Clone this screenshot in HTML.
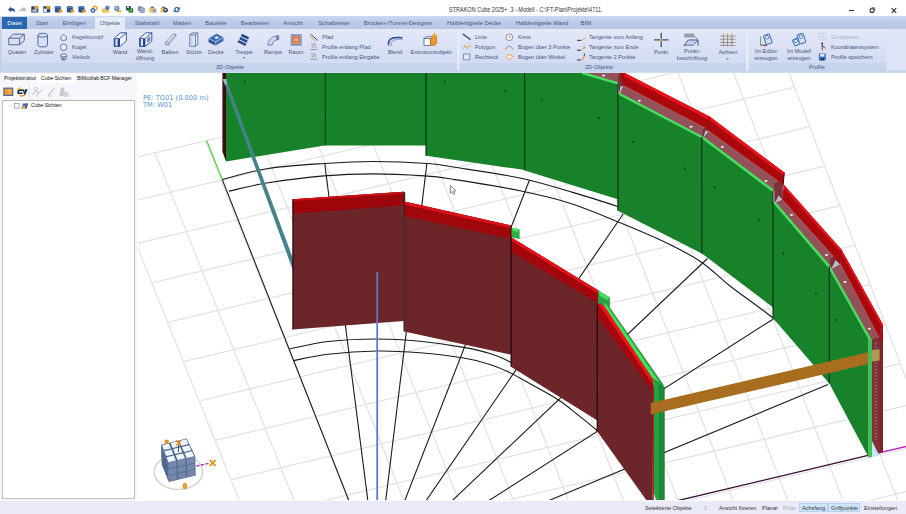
<!DOCTYPE html>
<html lang="de">
<head>
<meta charset="utf-8">
<title>STRAKON Cube 2025+ .3 - Modell</title>
<style>
html,body{margin:0;padding:0;}
body{width:906px;height:514px;position:relative;overflow:hidden;background:#fff;font-family:"Liberation Sans",sans-serif;color:#2b3a55;}
.abs{position:absolute;}
#title{left:0;top:0;width:906px;height:17px;background:#fff;}
#ttext{left:449px;top:6.3px;font-size:6.3px;line-height:8px;color:#333;white-space:nowrap;transform-origin:0 0;transform:scaleX(.875);}
#tabs{left:0;top:16.2px;width:906px;height:13.2px;background:linear-gradient(#cdd9f1,#bccbea 40%,#b7c7e7);}
.tab{position:absolute;top:1.1px;height:12px;line-height:12px;font-size:6.2px;color:#45557a;text-align:center;white-space:nowrap;transform:translateX(-50%) scaleX(.95);}
#datei{position:absolute;left:2px;top:0.8px;width:25px;height:12.4px;background:#2b67ad;color:#fff;font-size:6.2px;line-height:12px;text-align:center;}
#acttab{position:absolute;left:95px;top:0.8px;width:30px;height:12.4px;background:#e6ebf8;}
#ribbon{left:0;top:29.3px;width:906px;height:34px;background:linear-gradient(#e4e9f8,#dde3f6 40%,#d2dbf2);}
#riblab{left:0;top:63px;width:906px;height:7.4px;background:#c6d4ee;}
#ribgap{left:0;top:70.4px;width:906px;height:2.6px;background:linear-gradient(#bccbe9,#d3def3);}
.big{position:absolute;font-size:6.2px;line-height:7.7px;text-align:center;color:#45557a;white-space:nowrap;transform:translateX(-50%) scaleX(.9);top:48px;}
.sm{position:absolute;font-size:6.2px;line-height:8px;color:#45557a;white-space:nowrap;transform-origin:0 0;transform:scaleX(.9);}
.glab{position:absolute;top:61.9px;font-size:6.2px;line-height:9px;color:#45557a;white-space:nowrap;transform:translateX(-50%) scaleX(.9);}
#left{left:0;top:73px;width:137px;height:428px;background:#f6f6fb;}
#ltabs{position:absolute;left:0;top:0;width:137px;height:10px;}
.lt{position:absolute;top:1px;font-size:5.4px;line-height:9px;color:#222;white-space:nowrap;letter-spacing:-0.1px;transform-origin:0 0;transform:scaleX(.965);}
#tree{position:absolute;left:2px;top:26.6px;width:131px;height:397px;background:#fff;border:1px solid #bdbdc6;border-top:1.6px solid #b4b4bd;}
#status{left:0;top:501px;width:906px;height:13px;background:#e9e9f8;}
.st{position:absolute;top:3.2px;font-size:6px;line-height:8px;color:#333;white-space:nowrap;transform-origin:0 0;transform:scaleX(.92);}
.sth{position:absolute;top:2px;height:9px;background:#cfe3f9;border:1px solid #b3d1f3;box-sizing:border-box;}
#view{left:0;top:0;}
</style>
</head>
<body>
<!-- TITLE BAR -->
<div id="title" class="abs">
  <div id="ttext" class="abs">STRAKON Cube 2025+ .3 - Modell - C:\FT-Plan\Projekte\4711</div>
  <svg class="abs" style="left:0;top:0" width="906" height="17" viewBox="0 0 906 17" id="qat">
<path d="M8,9.6 L11.2,6.8 L11.2,8.3 C14.2,8.2 15.6,10 14.6,12.6 C14.2,11.2 13.2,10.7 11.2,10.8 L11.2,12.3 Z" fill="#2c4f9e"/>
<path d="M26.6,9.6 L23.4,6.8 L23.4,8.3 C20.4,8.2 19,10 20,12.6 C20.4,11.2 21.4,10.7 23.4,10.8 L23.4,12.3 Z" fill="#b9bcc6"/>
<rect x="31.3" y="6.2" width="7" height="6.3" rx="0.6" fill="#27467c"/>
<rect x="34.4" y="5.8" width="3.4" height="3.6" fill="#f0a02c"/>
<rect x="32.4" y="9.6" width="4.6" height="2" fill="#c9d6ea"/>
<rect x="43.2" y="6.2" width="7" height="6.3" rx="0.6" fill="#27467c"/>
<rect x="46.4" y="5.8" width="3.2" height="3.4" fill="#f0a02c"/>
<rect x="43.6" y="8.6" width="3.2" height="3.4" fill="#dfe6f2"/>
<path d="M54.8,7.2 a3,1.2 0 0 1 6,0 v4.2 a3,1.2 0 0 1 -6,0 z" fill="#2b5494"/>
<ellipse cx="57.8" cy="7.2" rx="3" ry="1.1" fill="#4a78bd"/>
<rect x="58.7" y="9.4" width="3.6" height="3" rx="0.8" fill="#e8942e"/>
<path d="M66.8,7.2 a3,1.2 0 0 1 6,0 v4.2 a3,1.2 0 0 1 -6,0 z" fill="#2b5494"/>
<ellipse cx="69.8" cy="7.2" rx="3" ry="1.1" fill="#4a78bd"/>
<rect x="70.7" y="9.4" width="3.6" height="3" rx="0.8" fill="#e8942e"/>
<path d="M78.4,7.2 a3,1.2 0 0 1 6,0 v4.2 a3,1.2 0 0 1 -6,0 z" fill="#2b5494"/>
<ellipse cx="81.4" cy="7.2" rx="3" ry="1.1" fill="#4a78bd"/>
<rect x="82.3" y="9.4" width="3.6" height="3" rx="0.8" fill="#e8942e"/>
<circle cx="95" cy="8.2" r="1.9" fill="none" stroke="#f0a02c" stroke-width="1.4"/>
<circle cx="92.9" cy="10.5" r="1.8" fill="none" stroke="#3b6cc0" stroke-width="1.4"/>
<path d="M102,8.4 h3 l0.8,0.9 h3.2 v3.4 h-7 z" fill="#f3c552"/>
<circle cx="107.3" cy="7.8" r="2.3" fill="#4b78c0"/>
<path d="M105.4,7.2 q1.9,-1 3.8,0" stroke="#a9c4ea" stroke-width="0.6" fill="none"/>
<circle cx="116.8" cy="8.4" r="2.6" fill="#5b8cd0"/>
<circle cx="116.4" cy="7.9" r="1.2" fill="#a9c6ee"/>
<path d="M116.6,10.6 h3 v-1 l1.9,1.7 l-1.9,1.7 v-1 h-3 z" fill="#f0a02c"/>
<rect x="125.9" y="5.9" width="5" height="4.6" rx="0.5" fill="#3b4a63"/>
<rect x="127" y="6.4" width="2" height="1.6" fill="#cfd8e6"/>
<rect x="128.6" y="8.4" width="4.6" height="4.2" fill="#1f7a25"/>
<path d="M129.6,10.4 h2.6 M130.9,9.2 v2.5" stroke="#7fd07f" stroke-width="0.8"/>
<rect x="137.8" y="6.3" width="4.2" height="4.6" rx="0.6" fill="#8394b4"/>
<rect x="139.8" y="7.8" width="4.6" height="4.8" rx="0.6" fill="#9fb0cc" stroke="#6b7e9f" stroke-width="0.6"/>
<path d="M149.1,8 h2.6 l0.7,0.8 h3 v3.8 h-6.3 z" fill="#ecc95e"/>
<rect x="152.6" y="8.6" width="3.8" height="4" fill="#9aa3b3"/>
<rect x="150.6" y="6.6" width="3.4" height="1.6" fill="#6a6f7c"/>
<path d="M160.5,8 h2.6 l0.7,0.8 h3 v3.8 h-6.3 z" fill="#ecc95e"/>
<circle cx="165.6" cy="10.2" r="2.4" fill="#2c4f86"/>
<circle cx="165.3" cy="9.8" r="1" fill="#e6d58a"/>
<rect x="162" y="6.6" width="3.4" height="1.6" fill="#6a6f7c"/>
<path d="M174,9 a2.9,2.6 0 0 1 5,-1.2 l0.9,-0.9 v2.8 h-2.8 l0.9,-0.9 a1.6,1.5 0 0 0 -2.6,0.4 z" fill="#2f5fae"/>
<path d="M179.6,10.2 a2.9,2.6 0 0 1 -5,1.2 l-0.9,0.9 v-2.8 h2.8 l-0.9,0.9 a1.6,1.5 0 0 0 2.6,-0.4 z" fill="#2f5fae"/>
<path d="M848.8,10.4 h5.2" stroke="#2a2a2a" stroke-width="1"/>
<rect x="870.2" y="8.8" width="3.6" height="3.6" rx="0.8" fill="none" stroke="#2a2a2a" stroke-width="1.1"/>
<path d="M871.4,8.4 q0,-0.7 0.7,-0.7 h2 q0.7,0 0.7,0.7 v2.4" fill="none" stroke="#2a2a2a" stroke-width="0.7"/>
<path d="M891.6,8.2 l4.6,4.6 M896.2,8.2 l-4.6,4.6" stroke="#2a2a2a" stroke-width="1.1"/>
</svg>
</div>
<!-- RIBBON TABS -->
<div id="tabs" class="abs">
  <div id="datei">Datei</div>
  <div id="acttab"></div>
  <div class="tab" style="left:42px">Start</div>
  <div class="tab" style="left:74px">Einfügen</div>
  <div class="tab" style="left:109.5px">Objekte</div>
  <div class="tab" style="left:146.5px">Stabstahl</div>
  <div class="tab" style="left:182px">Matten</div>
  <div class="tab" style="left:216px">Bauteile</div>
  <div class="tab" style="left:255.3px">Bearbeiten</div>
  <div class="tab" style="left:293.4px">Ansicht</div>
  <div class="tab" style="left:334px">Schalbretter</div>
  <div class="tab" style="left:398.2px">Brücken-/Tunnel-Designer</div>
  <div class="tab" style="left:474px">Halbfertigteile Decke</div>
  <div class="tab" style="left:541.7px">Halbfertigteile Wand</div>
  <div class="tab" style="left:586.3px">BIM</div>
</div>
<!-- RIBBON BODY -->
<div id="ribbon" class="abs"></div>
<div id="riblab" class="abs"></div>
<div id="ribgap" class="abs"></div>
<div id="ribtext">
  <div class="big" style="left:16.8px">Quader</div>
  <div class="big" style="left:43.9px">Zylinder</div>
  <div class="sm" style="left:72.4px;top:33px">Kegelstumpf</div>
  <div class="sm" style="left:72.4px;top:43px">Kugel</div>
  <div class="sm" style="left:72.4px;top:53px">Vieleck</div>
  <div class="big" style="left:120.3px">Wand</div>
  <div class="big" style="left:145.4px;top:46.5px">Wand-<br>öffnung</div>
  <div class="big" style="left:170.4px">Balken</div>
  <div class="big" style="left:193.7px">Stütze</div>
  <div class="big" style="left:216px">Decke</div>
  <div class="big" style="left:244px">Treppe</div>
  <div class="big" style="left:272.9px">Rampe</div>
  <div class="big" style="left:296.4px">Raum</div>
  <div class="sm" style="left:322.2px;top:33px">Pfad</div>
  <div class="sm" style="left:322.2px;top:43px">Profile entlang Pfad</div>
  <div class="sm" style="left:322.2px;top:53px">Profile entlang Eingabe</div>
  <div class="big" style="left:395.4px">Blend</div>
  <div class="big" style="left:430.5px">Extrusionsobjekt</div>
  <div class="glab" style="left:229.5px">3D-Objekte</div>

  <div class="sm" style="left:475.3px;top:33px">Linie</div>
  <div class="sm" style="left:475.3px;top:43px">Polygon</div>
  <div class="sm" style="left:475.3px;top:53px">Rechteck</div>
  <div class="sm" style="left:518px;top:33px">Kreis</div>
  <div class="sm" style="left:518px;top:43px">Bogen über 3 Punkte</div>
  <div class="sm" style="left:518px;top:53px">Bogen über Winkel</div>
  <div class="sm" style="left:589.3px;top:33px">Tangente vom Anfang</div>
  <div class="sm" style="left:589.3px;top:43px">Tangente zum Ende</div>
  <div class="sm" style="left:589.3px;top:53px">Tangente 2 Punkte</div>
  <div class="big" style="left:661.3px">Punkt</div>
  <div class="big" style="left:691.5px;top:46.5px">Punkt-<br>beschriftung</div>
  <div class="big" style="left:727.9px">Achsen</div>
  <div class="glab" style="left:599.4px">2D-Objekte</div>

  <div class="big" style="left:765.5px;top:46.5px">Im Editor<br>erzeugen</div>
  <div class="big" style="left:798.8px;top:46.5px">Im Modell<br>erzeugen</div>
  <div class="sm" style="left:831.1px;top:33px;color:#aab2c4">Gruppieren</div>
  <div class="sm" style="left:831.1px;top:43px">Koordinatensystem</div>
  <div class="sm" style="left:831.1px;top:53px">Profile speichern</div>
  <div class="glab" style="left:816.8px">Profile</div>
</div>

<!-- LEFT PANEL -->
<div id="left" class="abs">
  <div id="ltabs">
    <div class="abs" style="left:38px;top:0;width:37px;height:10px;background:#fff"></div>
    <div class="lt" style="left:4px">Projektstruktur</div>
    <div class="lt" style="left:41px">Cube-Sichten</div>
    <div class="lt" style="left:77px">BIMcollab BCF Manager</div>
  </div>
  <div id="tree">
    <div class="lt" style="left:27.5px;top:0.6px;line-height:8px">Cube-Sichten</div>
  </div>
</div>

<!-- VIEWPORT -->
<svg id="view" class="abs" width="906" height="514" viewBox="0 0 906 514">
  <defs><clipPath id="vp"><rect x="138" y="73" width="768" height="427"/></clipPath></defs>
  <g clip-path="url(#vp)" id="scene">
<g stroke="#e2e2e2" stroke-width="1.25" fill="none">
<line x1="104.3" y1="164.9" x2="245.1" y2="515.0" stroke="#e2e2e2" stroke-width="1.25"/>
<line x1="154.9" y1="152.9" x2="299.9" y2="515.0" stroke="#e2e2e2" stroke-width="1.25"/>
<line x1="205.5" y1="140.9" x2="354.8" y2="515.0" stroke="#e2e2e2" stroke-width="1.25"/>
<line x1="256.1" y1="128.8" x2="409.6" y2="515.0" stroke="#e2e2e2" stroke-width="1.25"/>
<line x1="306.8" y1="116.8" x2="464.5" y2="515.0" stroke="#e2e2e2" stroke-width="1.25"/>
<line x1="357.5" y1="104.8" x2="519.3" y2="515.0" stroke="#e2e2e2" stroke-width="1.25"/>
<line x1="408.2" y1="92.7" x2="574.2" y2="515.0" stroke="#e2e2e2" stroke-width="1.25"/>
<line x1="459.0" y1="80.7" x2="629.1" y2="515.0" stroke="#e2e2e2" stroke-width="1.25"/>
<line x1="509.8" y1="68.6" x2="683.9" y2="515.0" stroke="#e2e2e2" stroke-width="1.25"/>
<line x1="560.6" y1="56.5" x2="738.8" y2="515.0" stroke="#e2e2e2" stroke-width="1.25"/>
<line x1="611.5" y1="44.4" x2="793.6" y2="515.0" stroke="#e2e2e2" stroke-width="1.25"/>
<line x1="662.4" y1="32.4" x2="848.5" y2="515.0" stroke="#e2e2e2" stroke-width="1.25"/>
<line x1="713.4" y1="20.3" x2="903.3" y2="515.0" stroke="#e2e2e2" stroke-width="1.25"/>
<line x1="764.3" y1="8.1" x2="958.2" y2="515.0" stroke="#e2e2e2" stroke-width="1.25"/>
<line x1="104.3" y1="164.9" x2="764.3" y2="8.1" stroke="#e2e2e2" stroke-width="1.25"/>
<line x1="120.1" y1="204.2" x2="779.4" y2="47.7" stroke="#e2e2e2" stroke-width="1.25"/>
<line x1="135.9" y1="243.6" x2="794.5" y2="87.2" stroke="#e2e2e2" stroke-width="1.25"/>
<line x1="151.8" y1="282.9" x2="809.7" y2="126.7" stroke="#e2e2e2" stroke-width="1.25"/>
<line x1="167.6" y1="322.3" x2="824.8" y2="166.2" stroke="#e2e2e2" stroke-width="1.25"/>
<line x1="183.4" y1="361.6" x2="839.9" y2="205.7" stroke="#e2e2e2" stroke-width="1.25"/>
<line x1="199.2" y1="401.0" x2="855.0" y2="245.2" stroke="#e2e2e2" stroke-width="1.25"/>
<line x1="215.0" y1="440.3" x2="870.1" y2="284.7" stroke="#e2e2e2" stroke-width="1.25"/>
<line x1="230.8" y1="479.6" x2="885.2" y2="324.2" stroke="#e2e2e2" stroke-width="1.25"/>
<line x1="246.7" y1="519.0" x2="900.3" y2="363.7" stroke="#e2e2e2" stroke-width="1.25"/>
<line x1="262.5" y1="558.3" x2="915.5" y2="403.3" stroke="#e2e2e2" stroke-width="1.25"/>
<line x1="278.3" y1="597.7" x2="930.6" y2="442.8" stroke="#e2e2e2" stroke-width="1.25"/>
<line x1="294.1" y1="637.0" x2="945.7" y2="482.3" stroke="#e2e2e2" stroke-width="1.25"/>
<line x1="309.9" y1="676.4" x2="960.8" y2="521.8" stroke="#e2e2e2" stroke-width="1.25"/>
<line x1="325.7" y1="715.7" x2="975.9" y2="561.3" stroke="#e2e2e2" stroke-width="1.25"/>
<line x1="341.6" y1="755.1" x2="991.0" y2="600.8" stroke="#e2e2e2" stroke-width="1.25"/>
<line x1="357.4" y1="794.4" x2="1006.1" y2="640.3" stroke="#e2e2e2" stroke-width="1.25"/>
<line x1="373.2" y1="833.7" x2="1021.2" y2="679.8" stroke="#e2e2e2" stroke-width="1.25"/>
<line x1="389.0" y1="873.1" x2="1036.4" y2="719.3" stroke="#e2e2e2" stroke-width="1.25"/>
<line x1="404.8" y1="912.4" x2="1051.5" y2="758.9" stroke="#e2e2e2" stroke-width="1.25"/>
<line x1="420.6" y1="951.8" x2="1066.6" y2="798.4" stroke="#e2e2e2" stroke-width="1.25"/>
<line x1="436.5" y1="991.1" x2="1081.7" y2="837.9" stroke="#e2e2e2" stroke-width="1.25"/>
</g>
<g stroke="#1a1a1a" stroke-width="1.1" fill="none">
<path d="M222.3,179.6 C229.7,177.8 249.7,171.4 266.7,168.7 C283.7,166.0 306.4,164.7 324.1,163.5 C341.8,162.3 355.7,161.5 372.9,161.5 C390.1,161.5 413.7,162.5 427.4,163.5 C441.1,164.5 439.6,164.9 455.0,167.3 C470.4,169.7 500.7,173.9 520.0,178.0 C539.3,182.1 554.5,187.0 570.8,191.8 C587.0,196.6 602.6,201.2 617.5,206.6 C632.4,212.0 652.9,221.1 660.0,224.0"/>
<path d="M228.9,191.1 C235.2,189.8 250.8,185.5 266.7,183.0 C282.6,180.5 306.4,177.4 324.1,175.9 C341.8,174.4 356.1,173.9 372.9,173.9 C389.6,173.9 410.9,175.0 424.6,175.9 C438.3,176.8 439.1,177.1 455.0,179.6 C470.9,182.1 500.7,186.7 520.0,190.7 C539.3,194.7 554.2,198.1 570.8,203.4 C587.4,208.7 603.4,215.8 619.6,222.5 C635.9,229.2 654.5,237.0 668.3,243.7 C682.1,250.4 691.9,255.6 702.2,262.7 C712.5,269.8 718.2,276.8 730.0,286.0 C741.8,295.2 761.3,308.3 773.0,318.1 C784.7,327.9 795.5,340.5 800.0,345.0"/>
<path d="M289.6,348.9 C296.0,347.7 313.5,343.1 328.0,341.5 C342.5,339.9 361.4,339.0 376.7,339.0 C392.0,339.0 405.5,339.9 420.0,341.3 C434.5,342.7 451.9,345.3 463.6,347.4 C475.3,349.4 482.1,351.1 490.0,353.6 C497.9,356.1 504.0,358.7 511.0,362.4 C518.0,366.1 528.5,373.7 532.0,376.0"/>
<path d="M293.8,360.6 C299.5,359.5 314.2,355.8 328.0,354.2 C341.8,352.6 361.4,351.2 376.7,351.0 C392.0,350.8 405.5,351.6 420.0,352.8 C434.5,354.0 451.9,356.1 463.6,358.0 C475.3,359.9 482.1,362.0 490.0,364.5 C497.9,367.0 503.9,369.7 511.0,373.2 C518.1,376.7 524.9,380.9 532.8,385.3 C540.6,389.7 550.6,394.9 558.1,399.8 C565.6,404.7 571.0,409.4 577.5,414.5 C584.0,419.6 589.9,424.2 597.0,430.5 C604.1,436.8 616.2,448.4 620.0,452.0"/>
<line x1="222.3" y1="179.6" x2="377.0" y2="572.0" stroke="#1a1a1a" stroke-width="1.1"/>
<line x1="324.7" y1="163.5" x2="377.0" y2="572.0" stroke="#1a1a1a" stroke-width="1.1"/>
<line x1="426.9" y1="163.5" x2="377.0" y2="572.0" stroke="#1a1a1a" stroke-width="1.1"/>
<line x1="529.5" y1="180.0" x2="377.0" y2="572.0" stroke="#1a1a1a" stroke-width="1.1"/>
<line x1="623.2" y1="214.0" x2="377.0" y2="572.0" stroke="#1a1a1a" stroke-width="1.1"/>
<line x1="707.5" y1="258.5" x2="377.0" y2="572.0" stroke="#1a1a1a" stroke-width="1.1"/>
<line x1="773.0" y1="319.2" x2="377.0" y2="572.0" stroke="#1a1a1a" stroke-width="1.1"/>
<line x1="828.0" y1="384.5" x2="377.0" y2="572.0" stroke="#1a1a1a" stroke-width="1.1"/>
</g>
<line x1="868.1" y1="455.4" x2="377.0" y2="572.0" stroke="#3a0a35" stroke-width="1.3"/>
<line x1="868.1" y1="455.4" x2="910.0" y2="445.6" stroke="#c21fc0" stroke-width="1.3"/>
<line x1="206.6" y1="140.5" x2="222.3" y2="179.6" stroke="#5ccf4a" stroke-width="1.3"/>
<polygon points="572.0,70.0 626.0,70.0 623.9,86.0 618.0,83.5 582.0,73.0" fill="#93525a"/>
<polygon points="623.9,85.7 708.7,129.8 702.5,137.0 619.5,93.5" fill="#93525a"/>
<polygon points="708.7,131.0 783.5,185.0 774.1,191.3 702.8,137.5" fill="#93525a"/>
<polygon points="782.2,199.4 840.0,263.7 829.8,266.9 774.5,202.6" fill="#93525a"/>
<polygon points="840.5,264.0 879.0,337.4 870.5,339.5 830.8,269.0" fill="#93525a"/>
<polygon points="618.0,76.0 623.9,73.0 623.9,88.0 618.5,93.0" fill="#7b3138"/>
<polygon points="702.5,130.0 708.7,124.0 708.7,131.5 702.8,137.5" fill="#7b3138"/>
<polygon points="774.1,184.0 783.0,178.0 782.7,199.4 774.3,202.0" fill="#7b3138"/>
<polygon points="829.8,259.0 840.0,253.0 840.3,264.0 830.5,269.0" fill="#7b3138"/>
<polygon points="619.2,93.2 623.8,86.6 620.6,86.0" fill="#b4bfcc"/>
<polygon points="703.4,137.4 708.6,131.4 705.4,130.6" fill="#b4bfcc"/>
<polygon points="775.2,202.4 782.4,199.6 778.6,195.6" fill="#b4bfcc"/>
<polygon points="831.4,268.8 839.9,264.2 835.6,260.0" fill="#b4bfcc"/>
<polygon points="624.8,70.0 624.8,73.0 709.6,116.6 708.7,129.8 623.9,85.7 618.0,70.0" fill="#a9080d"/>
<polygon points="709.6,116.6 784.4,172.4 783.5,185.0 708.7,131.0" fill="#a9080d"/>
<polygon points="783.7,184.4 841.6,249.7 840.0,263.7 782.2,199.4" fill="#a9080d"/>
<polygon points="841.6,249.7 882.9,324.5 879.0,337.4 840.5,264.0" fill="#a9080d"/>
<polygon points="624.8,73.0 709.6,116.6 709.3,120.0 624.5,76.4" fill="#e8121a"/>
<polygon points="709.6,116.6 784.4,172.4 784.1,175.8 709.3,120.0" fill="#e8121a"/>
<polygon points="783.7,184.4 841.6,249.7 841.3,253.1 783.4,187.8" fill="#e8121a"/>
<polygon points="841.6,249.7 882.9,324.5 882.6,327.9 841.3,253.1" fill="#e8121a"/>
<line x1="784.2" y1="172.4" x2="783.2" y2="185.0" stroke="#5a0508" stroke-width="1"/>
<line x1="709.3" y1="116.6" x2="708.7" y2="130.0" stroke="#7a0508" stroke-width="0.8"/>
<line x1="841.3" y1="249.7" x2="840.2" y2="264.0" stroke="#7a0508" stroke-width="0.8"/>
<polygon points="226.0,70.0 324.5,70.0 324.5,145.4 226.0,161.5" fill="#17822a"/>
<polygon points="324.5,70.0 426.0,70.0 426.0,145.4 324.5,145.4" fill="#17822a"/>
<polygon points="426.0,70.0 524.7,70.0 524.7,170.0 426.0,155.8" fill="#17822a"/>
<polygon points="524.7,70.0 573.0,70.0 582.4,73.0 617.9,83.4 617.9,199.2 524.7,170.5" fill="#17822a"/>
<polygon points="617.9,93.2 701.8,137.0 701.8,253.4 617.9,210.8" fill="#17822a"/>
<polygon points="701.8,137.0 773.0,190.6 773.0,307.4 701.8,253.4" fill="#17822a"/>
<polygon points="773.0,201.5 829.3,266.5 829.3,383.4 773.0,318.1" fill="#17822a"/>
<polygon points="829.3,267.5 868.6,338.0 868.6,457.2 829.3,383.4" fill="#17822a"/>
<polygon points="222.4,70.0 226.0,70.0 226.0,161.5 222.4,151.5" fill="#3b0d12"/>
<line x1="582.4" y1="73.0" x2="617.9" y2="83.4" stroke="#45e060" stroke-width="2.5"/>
<line x1="618.5" y1="93.5" x2="701.8" y2="137.0" stroke="#45e060" stroke-width="2.5"/>
<line x1="702.8" y1="137.8" x2="773.5" y2="191.0" stroke="#45e060" stroke-width="2.5"/>
<line x1="774.5" y1="202.6" x2="829.5" y2="266.9" stroke="#45e060" stroke-width="2.5"/>
<line x1="830.5" y1="269.0" x2="870.0" y2="339.5" stroke="#45e060" stroke-width="2.5"/>
<line x1="325.0" y1="70.0" x2="325.0" y2="145.4" stroke="#0c2a10" stroke-width="1.1"/>
<line x1="426.0" y1="70.0" x2="426.0" y2="155.8" stroke="#0c2a10" stroke-width="1.1"/>
<line x1="524.7" y1="70.0" x2="524.7" y2="170.3" stroke="#0c2a10" stroke-width="1.1"/>
<line x1="617.9" y1="83.4" x2="617.9" y2="210.8" stroke="#0c2a10" stroke-width="1.1"/>
<line x1="701.8" y1="137.0" x2="701.8" y2="253.4" stroke="#0c2a10" stroke-width="1.1"/>
<line x1="773.0" y1="190.6" x2="773.0" y2="318.1" stroke="#0c2a10" stroke-width="1.1"/>
<line x1="829.3" y1="266.5" x2="829.3" y2="383.4" stroke="#0c2a10" stroke-width="1.1"/>
<polygon points="868.3,338.5 872.0,339.5 872.0,457.0 868.3,457.5" fill="#3fbf55"/>
<polygon points="872.0,339.0 879.0,337.0 883.0,324.5 883.0,452.0 872.0,455.5" fill="#7c3038"/>
<polygon points="879.6,336.0 883.0,324.5 883.0,452.0 879.6,453.0" fill="#84222a"/>
<polygon points="879.6,336.0 883.0,324.5 883.0,341.0 879.6,341.0" fill="#a30c12"/>
<polygon points="872.0,441.0 879.0,455.0 872.0,456.5" fill="#bfe6f2"/>
<line x1="875.8" y1="343" x2="875.8" y2="440" stroke="#94505a" stroke-width="3" stroke-dasharray="1.6 1.6"/>
<circle cx="244.5" cy="81.6" r="0.9" fill="#0a3512"/>
<circle cx="444.5" cy="81.6" r="0.9" fill="#0a3512"/>
<circle cx="505.5" cy="91.0" r="0.9" fill="#0a3512"/>
<circle cx="542.2" cy="99.7" r="0.9" fill="#0a3512"/>
<circle cx="599.0" cy="118.0" r="0.9" fill="#0a3512"/>
<circle cx="633.3" cy="142.0" r="0.9" fill="#0a3512"/>
<circle cx="684.8" cy="168.5" r="0.9" fill="#0a3512"/>
<circle cx="715.0" cy="187.0" r="0.9" fill="#0a3512"/>
<circle cx="759.5" cy="220.5" r="0.9" fill="#0a3512"/>
<circle cx="783.3" cy="253.5" r="0.9" fill="#0a3512"/>
<circle cx="816.0" cy="294.0" r="0.9" fill="#0a3512"/>
<circle cx="836.0" cy="320.0" r="0.9" fill="#0a3512"/>
<circle cx="860.5" cy="365.5" r="0.9" fill="#0a3512"/>
<ellipse cx="603.6" cy="75.4" rx="1.5" ry="1" fill="#f2f2f2"/>
<ellipse cx="639.4" cy="100.7" rx="1.5" ry="1" fill="#f2f2f2"/>
<ellipse cx="691.0" cy="126.8" rx="1.5" ry="1" fill="#f2f2f2"/>
<ellipse cx="722.3" cy="147.0" rx="1.5" ry="1" fill="#f2f2f2"/>
<ellipse cx="766.0" cy="181.0" rx="1.5" ry="1" fill="#f2f2f2"/>
<ellipse cx="791.5" cy="215.0" rx="1.5" ry="1" fill="#f2f2f2"/>
<ellipse cx="826.5" cy="255.0" rx="1.5" ry="1" fill="#f2f2f2"/>
<ellipse cx="845.0" cy="282.0" rx="1.5" ry="1" fill="#f2f2f2"/>
<ellipse cx="869.4" cy="328.8" rx="1.5" ry="1" fill="#f2f2f2"/>
<polygon points="222.8,79.0 226.2,79.0 296.0,266.5 296.0,278.0 291.0,265.0" fill="#44838a"/>
<polygon points="222.8,79.0 226.6,79.0 226.6,86.0 224.6,84.0" fill="#9fb6c8"/>
<polygon points="292.8,199.2 403.8,191.8 403.8,321.0 292.8,329.4" fill="#6c2529"/>
<polygon points="404.3,201.6 511.0,225.4 511.0,354.6 404.3,331.6" fill="#6c2529"/>
<polygon points="511.0,237.3 598.4,290.4 597.0,420.2 511.0,366.7" fill="#6c2529"/>
<polygon points="597.3,304.0 598.4,304.0 653.5,377.8 652.3,500.5 646.6,500.5 597.0,431.0" fill="#6c2529"/>
<polygon points="292.8,199.2 403.8,191.8 403.8,205.3 292.8,213.8" fill="#9c060a"/>
<polygon points="404.3,201.6 511.0,225.4 511.0,239.0 404.3,216.1" fill="#a0070b"/>
<polygon points="511.0,237.3 598.4,290.4 597.3,302.4 511.0,251.6" fill="#a3070c"/>
<polygon points="597.3,303.3 598.4,303.0 652.8,378.6 652.3,390.4 597.3,317.0" fill="#a5080e"/>
<polygon points="292.8,199.2 403.8,191.8 403.8,193.6 292.8,201.1" fill="#cf0f16"/>
<polygon points="404.3,201.6 511.0,225.4 511.0,228.2 404.3,204.4" fill="#dc1119"/>
<polygon points="511.0,237.3 598.4,290.4 598.2,293.6 511.0,240.5" fill="#e8121a"/>
<polygon points="598.1,303.3 602.8,303.3 652.8,378.6 652.6,384.0 649.3,379.0" fill="#f0141c"/>
<polygon points="403.8,191.8 405.5,192.8 405.5,202.8 403.8,202.4" fill="#7e8a8a"/>
<polygon points="511.6,227.8 519.6,229.6 519.6,239.0 511.6,237.6" fill="#2fae48"/>
<polygon points="511.6,227.8 519.6,229.6 517.6,232.0 512.6,230.8" fill="#45e060"/>
<polygon points="598.4,290.8 609.6,297.6 609.6,307.7 598.4,302.8" fill="#2aa444" stroke="#1b6e2a" stroke-width="0.5"/>
<polygon points="598.4,290.8 609.6,297.6 607.2,300.2 599.6,295.4" fill="#45e060"/>
<polygon points="602.8,303.3 609.6,307.7 663.6,385.5 663.6,388.5 652.8,378.6" fill="#25a840"/>
<polygon points="602.8,303.3 607.0,305.6 659.6,382.5 652.8,378.6" fill="#42e25e"/>
<line x1="609.6" y1="307.7" x2="663.6" y2="385.5" stroke="#155c22" stroke-width="0.6"/>
<polygon points="653.6,379.2 664.2,388.0 664.2,500.5 653.6,500.5" fill="#1e9238"/>
<polygon points="653.6,379.2 659.8,384.4 659.8,500.5 653.6,500.5" fill="#27a042"/>
<line x1="653.8" y1="379.4" x2="664.0" y2="388.0" stroke="#1b6e2a" stroke-width="0.7"/>
<line x1="659.8" y1="385.0" x2="659.8" y2="500.0" stroke="#166a26" stroke-width="0.8"/>
<line x1="664.2" y1="386.5" x2="664.2" y2="500.0" stroke="#14602a" stroke-width="0.8"/>
<polygon points="652.3,385.0 653.8,386.0 653.8,500.5 652.3,500.5" fill="#a30c12"/>
<polygon points="653.8,493.0 656.5,500.5 653.8,500.5" fill="#bfe6f2"/>
<line x1="292.9" y1="199.2" x2="292.9" y2="329.4" stroke="#1c0607" stroke-width="1.1"/>
<line x1="404.1" y1="192.0" x2="404.1" y2="331.6" stroke="#1c0607" stroke-width="1.1"/>
<line x1="511.1" y1="226.0" x2="511.1" y2="366.7" stroke="#1c0607" stroke-width="1.1"/>
<line x1="597.2" y1="304.0" x2="597.2" y2="431.0" stroke="#1c0607" stroke-width="1.1"/>
<polygon points="650.7,403.0 868.3,352.3 868.3,364.0 650.7,414.5" fill="#a86d1e"/>
<polygon points="872.0,350.0 879.6,349.3 879.6,360.5 872.0,361.5" fill="#b09a52"/>
<line x1="377.2" y1="272.3" x2="377.2" y2="501.0" stroke="#587ccc" stroke-width="1.8"/>
  </g>
<g font-family="'DejaVu Sans','Liberation Sans',sans-serif" font-size="6.7" fill="#4f93d2">
<text x="143" y="100">PE: TG01 (0.000 m)</text>
<text x="143" y="106.8">TM: W01</text>
</g>
<path d="M450.3,185.2 L450.3,193.2 L452.2,191.6 L453.6,194.4 L454.8,193.8 L453.4,191.1 L456,190.8 Z" fill="#fff" stroke="#555" stroke-width="0.7" stroke-linejoin="round"/>
<ellipse cx="178.4" cy="472" rx="24.2" ry="17.5" fill="none" stroke="#d6d6d6" stroke-width="1.6"/>
<polygon points="161.0,444.8 167.8,462.9 168.8,482.0 161.8,464.5" fill="#445a82"/>
<polygon points="167.8,462.9 195.3,456.5 195.7,475.6 168.8,482.0" fill="#5b7099"/>
<polygon points="161.0,444.8 186.8,438.5 195.3,456.5 167.8,462.9" fill="#4a5f88"/>
<polygon points="162.0,445.2 169.0,443.4 171.0,448.4 163.9,450.1" fill="#edf7fd"/>
<polygon points="168.7,463.3 176.2,461.5 176.4,466.8 168.9,468.5" fill="#7689ad"/>
<polygon points="161.2,445.9 163.1,450.9 163.3,456.2 161.4,451.3" fill="#5a6f98"/>
<polygon points="164.3,451.2 171.5,449.5 173.5,454.4 166.1,456.1" fill="#edf7fd"/>
<polygon points="169.0,469.6 176.4,467.9 176.7,473.1 169.3,474.9" fill="#7689ad"/>
<polygon points="161.5,452.5 163.4,457.4 163.6,462.7 161.7,457.9" fill="#5a6f98"/>
<polygon points="166.5,457.2 173.9,455.5 175.9,460.4 168.4,462.2" fill="#edf7fd"/>
<polygon points="169.3,476.0 176.7,474.3 176.9,479.5 169.6,481.2" fill="#7689ad"/>
<polygon points="161.8,459.1 163.7,463.9 163.9,469.2 162.0,464.4" fill="#5a6f98"/>
<polygon points="170.6,443.1 177.7,441.3 179.8,446.3 172.6,448.0" fill="#edf7fd"/>
<polygon points="177.8,461.1 185.3,459.4 185.5,464.6 178.0,466.4" fill="#7689ad"/>
<polygon points="163.5,452.0 165.4,456.9 165.6,462.2 163.7,457.3" fill="#5a6f98"/>
<polygon points="173.1,449.1 180.3,447.3 182.4,452.3 175.1,454.0" fill="#edf7fd"/>
<polygon points="178.1,467.5 185.5,465.8 185.7,471.0 178.3,472.7" fill="#7689ad"/>
<polygon points="163.8,458.5 165.7,463.3 165.9,468.6 164.0,463.8" fill="#5a6f98"/>
<polygon points="175.5,455.1 182.9,453.4 185.1,458.3 177.6,460.0" fill="#edf7fd"/>
<polygon points="178.3,473.9 185.7,472.1 185.9,477.4 178.6,479.1" fill="#7689ad"/>
<polygon points="164.1,464.9 166.0,469.8 166.2,475.1 164.3,470.3" fill="#5a6f98"/>
<polygon points="179.2,441.0 186.3,439.2 188.6,444.1 181.4,445.9" fill="#edf7fd"/>
<polygon points="187.0,459.0 194.5,457.3 194.6,462.5 187.1,464.2" fill="#7689ad"/>
<polygon points="165.8,458.0 167.6,462.9 167.9,468.2 166.0,463.3" fill="#5a6f98"/>
<polygon points="181.9,447.0 189.1,445.2 191.4,450.2 184.1,451.9" fill="#edf7fd"/>
<polygon points="187.2,465.4 194.6,463.6 194.7,468.9 187.3,470.6" fill="#7689ad"/>
<polygon points="166.1,464.4 168.0,469.3 168.2,474.5 166.3,469.7" fill="#5a6f98"/>
<polygon points="184.5,453.0 191.9,451.2 194.2,456.2 186.7,457.9" fill="#edf7fd"/>
<polygon points="187.4,471.7 194.8,470.0 194.9,475.2 187.5,477.0" fill="#7689ad"/>
<polygon points="166.4,470.8 168.3,475.7 168.6,480.9 166.6,476.1" fill="#5a6f98"/>
<line x1="196.4" y1="466" x2="209" y2="463.3" stroke="#b02ab0" stroke-width="1.4" stroke-dasharray="3.2 1.4"/>
<path d="M210.3,460.5 L215.1,465.3 M210.3,465.3 L215.1,460.5" stroke="#ef8618" stroke-width="1.7" stroke-linecap="round"/>
<path d="M176.4,441.0 L180.4,445.0 M176.4,445.0 L180.4,441.0" stroke="#ef8618" stroke-width="1.7" stroke-linecap="round"/>
<path d="M165.3,440.3 L168.1,443.1 M165.3,443.1 L168.1,440.3" stroke="#ef8618" stroke-width="1.7" stroke-linecap="round"/>
<line x1="178.5" y1="445" x2="178.5" y2="452" stroke="#30406a" stroke-width="0.9"/>
<ellipse cx="184.9" cy="486" rx="2" ry="3" fill="#f0a02a" stroke="#d07a10" stroke-width="0.5"/>
</svg>

<!-- STATUS BAR -->
<div id="status" class="abs">
  <div class="sth" style="left:799px;width:28.5px"></div>
  <div class="sth" style="left:828px;width:31.5px"></div>
  <div class="st" style="left:644.6px">Selektierte Objekte</div>
  <div class="st" style="left:703.5px;color:#999">1</div>
  <div class="st" style="left:718.9px">Ansicht fixieren</div>
  <div class="st" style="left:762.2px">Planar</div>
  <div class="st" style="left:783px;color:#aaa">Polar</div>
  <div class="st" style="left:802px">Achsfang</div>
  <div class="st" style="left:830.5px">Griffpunkte</div>
  <div class="st" style="left:863.5px">Einstellungen</div>
</div>
<svg class="abs" style="left:0;top:0;pointer-events:none" width="906" height="514" viewBox="0 0 906 514" id="chromeicons">
<rect x="457.2" y="29.3" width="2.3" height="41.1" fill="#e9edf9"/>
<rect x="746.2" y="29.3" width="2.3" height="41.1" fill="#e9edf9"/>
<rect x="886.5" y="29.3" width="20" height="41.1" fill="#dfe5f7"/>
<rect x="0" y="29.3" width="1.6" height="41.1" fill="#c3cfe8"/>
<path d="M8.8,38.2 L13.4,34.2 L24.3,34.2 L24.3,40.6 L19.6,44.8 L8.8,44.8 Z" fill="#d6defa" stroke="#4a5f8a" stroke-width="0.9" stroke-linejoin="round"/>
<path d="M8.8,38.2 H19.6 V44.8 M19.6,38.2 L24.3,34.2" fill="none" stroke="#4a5f8a" stroke-width="0.9"/>
<path d="M37.9,35.2 a4.8,2 0 0 1 9.6,0 v9.8 a4.8,2 0 0 1 -9.6,0 z" fill="#d6defa" stroke="#4a5f8a" stroke-width="0.9"/>
<path d="M37.9,35.2 a4.8,2 0 0 0 9.6,0" fill="none" stroke="#4a5f8a" stroke-width="0.9"/>
<path d="M60.6,39 Q60.8,36.4 62.4,35.4 a1.3,0.9 0 0 1 2.4,0 Q66.4,36.4 66.6,39 a3,1.4 0 0 1 -6,0 z" fill="#e9edfb" stroke="#4a5f8a" stroke-width="0.8"/>
<circle cx="63.6" cy="47.2" r="3.3" fill="#e9edfb" stroke="#4a5f8a" stroke-width="0.8"/>
<path d="M60.8,55.4 a2.9,1.4 0 0 1 5.8,0 l-0.8,3.8 a2.1,1 0 0 1 -4.2,0 z" fill="#e9edfb" stroke="#4a5f8a" stroke-width="0.8"/>
<path d="M60.8,55.4 a2.9,1.4 0 0 0 5.8,0" fill="none" stroke="#4a5f8a" stroke-width="0.8"/>
<rect x="62.5" y="57.6" width="2.2" height="2" fill="#4a5f8a"/>
<path d="M114.2,38.2 L120.6,32.8 L126.4,32.8 L126.4,41 L120.0,46.4 L114.2,46.4 Z" fill="#eef2fc" stroke="#27498c" stroke-width="0.9" stroke-linejoin="round"/>
<path d="M114.2,38.2 h5.8 v8.2 h-5.8 z" fill="#24478f"/>
<path d="M115.4,39 h2.2 v6.8 h-2.2 z" fill="#dbe6f8"/>
<path d="M120.0,38.2 L126.4,32.8" stroke="#27498c" stroke-width="0.9"/>
<path d="M139.6,38.2 L146.0,32.8 L151.8,32.8 L151.8,41 L145.4,46.4 L139.6,46.4 Z" fill="#eef2fc" stroke="#27498c" stroke-width="0.9" stroke-linejoin="round"/>
<path d="M139.6,38.2 h5.8 v8.2 h-5.8 z" fill="#24478f"/>
<path d="M140.8,39 h2.2 v6.8 h-2.2 z" fill="#dbe6f8"/>
<path d="M145.4,38.2 L151.8,32.8" stroke="#27498c" stroke-width="0.9"/>
<path d="M147.2,38.6 l3,-2.6 v4.4 l-3,2.6 z" fill="#5e86c6"/>
<path d="M165.4,42.4 L173,34 L176,34 L176,36 L168.6,44.6 L165.4,44.6 Z" fill="#e3e8f8" stroke="#7486a8" stroke-width="0.8" stroke-linejoin="round"/>
<path d="M165.4,42.4 h3.2 v2.2 M168.6,42.4 L176,34" fill="none" stroke="#7486a8" stroke-width="0.8"/>
<path d="M166.6,45.6 L170.2,45.2" stroke="#a6b2c9" stroke-width="0.8"/>
<path d="M189.8,34.8 L192.2,32.9 L197.8,32.9 L197.8,44.4 L195.4,46.3 L189.8,46.3 Z" fill="#e6ebfa" stroke="#5a73a3" stroke-width="0.9" stroke-linejoin="round"/>
<path d="M189.8,34.8 h5.6 v11.5 M195.4,34.8 L197.8,32.9" fill="none" stroke="#5a73a3" stroke-width="0.9"/>
<rect x="190.8" y="36" width="2" height="9.2" fill="#c5d2ee"/>
<path d="M208.9,38.8 L216.4,34.2 L223,37.4 L223,40.8 L215.6,45.2 L208.9,42 Z" fill="#3c6eb5" stroke="#2a4f92" stroke-width="0.7" stroke-linejoin="round"/>
<path d="M208.9,38.8 L215.6,42 L223,37.4 M215.6,42 V45.2" fill="none" stroke="#e8eefb" stroke-width="0.7"/>
<path d="M214.2,37.6 L216.8,36.2 L219.2,37.4 L216.6,38.9 Z" fill="#e8eefb"/>
<path d="M209.2,39.6 L215.4,42.6 V45 L209.2,41.9 Z" fill="#2a4f92"/>
<path d="M241.4,35.0 L248.6,38.3" stroke="#24478f" stroke-width="2.5"/>
<path d="M239.8,38.1 L247.2,41.6" stroke="#24478f" stroke-width="2.5"/>
<path d="M238.1,41.2 L245.9,44.9" stroke="#24478f" stroke-width="2.5"/>
<path d="M242.6,57.2 h2.6 l-1.3,1.5 z" fill="#56668a"/>
<path d="M267.9,45 C268,39.6 272,36 278.8,35.6 L278.8,39.6 C275,39.8 272.4,41.6 272.2,45 Z" fill="#cdd6f4" stroke="#5a6d98" stroke-width="0.8" stroke-linejoin="round"/>
<path d="M277.2,35.8 V39.7" stroke="#3a4a70" stroke-width="1.2"/>
<rect x="290.7" y="34.2" width="11" height="11.6" fill="#8196b8"/>
<rect x="292.5" y="36" width="7.4" height="8" fill="#e8875c"/>
<rect x="294" y="38" width="4.4" height="3.6" fill="#f4b08a" stroke="#b5562e" stroke-width="0.5"/>
<path d="M310.4,34 L317.6,40.4" stroke="#3a3f55" stroke-width="1"/>
<path d="M309.6,36 L316.2,41.8" stroke="#f0a050" stroke-width="1"/>
<path d="M311,44.2 h4.2 v2.6 l1.2,1.2 M310.2,49.6 h7" fill="none" stroke="#7d88a3" stroke-width="0.8"/>
<circle cx="312.6" cy="46.8" r="1.1" fill="#c9a27a"/>
<path d="M311,54.0 h4.2 v2.6 l1.2,1.2 M310.2,59.4 h7" fill="none" stroke="#7d88a3" stroke-width="0.8"/>
<circle cx="312.6" cy="56.6" r="1.1" fill="#c9a27a"/>
<path d="M388.2,45.4 C387.4,39 392,36.4 402.2,37.6 L402.2,39.6 C394,38.8 391,41 391.4,45.4 Z" fill="#c5cff2" stroke="#7a8cb8" stroke-width="0.6"/>
<path d="M388.6,44.6 C387.8,39 392,36.6 402.2,37.8" fill="none" stroke="#2d4d94" stroke-width="1.5"/>
<rect x="424" y="38.4" width="6.6" height="7" fill="#fbfcff" stroke="#5a6d98" stroke-width="0.9"/>
<path d="M430.6,38.4 L433.2,36.6 L436.6,36.6 L436.6,43.6 L434,45.4 L430.6,45.4 Z" fill="#f0962a" stroke="#b96a12" stroke-width="0.6"/>
<path d="M424,38.4 L426.6,36.6 L433.2,36.6" fill="none" stroke="#5a6d98" stroke-width="0.8"/>
<path d="M434.6,32.4 l0.9,1.9 l2,0.3 l-1.5,1.4 l0.4,2 l-1.8,-1 l-1.8,1 l0.4,-2 l-1.5,-1.4 l2,-0.3 z" fill="#f5a623"/>
<path d="M462.8,34 L470.7,39.8" stroke="#2f3d5e" stroke-width="1.1"/>
<path d="M463,48.8 L465.2,45.6 L467.4,48.4 L469.6,45.2 L471,46.4" fill="none" stroke="#e69a4a" stroke-width="1"/>
<rect x="463.6" y="54" width="6.2" height="5.8" fill="#dfe8fb" stroke="#6a7da5" stroke-width="0.8"/>
<circle cx="509.3" cy="37.3" r="3.4" fill="#eef1fb" stroke="#7d879c" stroke-width="0.9"/>
<circle cx="509.5" cy="37.2" r="0.9" fill="#f0962a"/>
<path d="M509.5,37.2 L511.4,35.4" stroke="#e69a4a" stroke-width="0.6"/>
<path d="M505.8,49 Q509.3,43 512.8,49" fill="none" stroke="#8a8f9c" stroke-width="1"/>
<circle cx="505.8" cy="48.8" r="0.8" fill="#e69a4a"/><circle cx="512.8" cy="48.8" r="0.8" fill="#e69a4a"/>
<path d="M505.8,56.6 Q509.3,52.2 512.8,56.6 L509.3,60.2 Z" fill="#fbe9d2" stroke="#e69a4a" stroke-width="0.9" stroke-linejoin="round"/>
<path d="M577,40.4 H581.4" stroke="#3a4666" stroke-width="1.1"/><path d="M581,40.4 Q584,40.2 584.8,37.6" fill="none" stroke="#e69a4a" stroke-width="1"/>
<path d="M577,50.2 H581" stroke="#3a4666" stroke-width="1.1"/><path d="M581.4,50 Q583.6,49.6 584.6,46.8 M583,46.8 h1.8 v1.8" fill="none" stroke="#e69a4a" stroke-width="0.9"/>
<path d="M577,60 H580.6" stroke="#3a4666" stroke-width="1.1"/><path d="M580.4,60 Q584.4,59.6 584.4,53.8" fill="none" stroke="#e69a4a" stroke-width="1.1"/><path d="M584.4,53.4 V56" stroke="#3a4666" stroke-width="0.9"/>
<path d="M654,39.9 H668.5 M661.2,32.8 V47.2" stroke="#3a4f78" stroke-width="1.3"/>
<circle cx="661.2" cy="39.9" r="1.5" fill="#f5a020"/>
<rect x="684.2" y="33.6" width="10" height="3.8" rx="0.5" fill="#9a9ca6"/>
<path d="M694.2,35.4 L697.6,39.6" stroke="#6d7890" stroke-width="0.8"/>
<path d="M684,45.6 L688.4,40 L698,40 L698,45.6" fill="none" stroke="#3a4f88" stroke-width="1"/>
<path d="M685.4,44.6 L689,41 L696.4,41 L692.8,44.6 Z" fill="#c3cff2"/>
<path d="M684,45.2 H693 L697.6,40.4" fill="none" stroke="#3a4f88" stroke-width="0.8"/>
<path d="M723.4,33 V46.5" stroke="#d9a05a" stroke-width="0.9"/>
<path d="M727.6,33 V46.5" stroke="#d9a05a" stroke-width="0.9"/>
<path d="M731.8,33 V46.5" stroke="#d9a05a" stroke-width="0.9"/>
<path d="M720.1,36.0 H735.4" stroke="#6a7288" stroke-width="0.7"/>
<path d="M720.1,39.2 H735.4" stroke="#6a7288" stroke-width="0.7"/>
<path d="M720.1,42.4 H735.4" stroke="#6a7288" stroke-width="0.7"/>
<path d="M720.1,45.4 H735.4" stroke="#6a7288" stroke-width="0.7"/>
<path d="M723.4,36 V45.4" stroke="#7a6a58" stroke-width="0.5" opacity="0.6"/>
<path d="M727.6,36 V45.4" stroke="#7a6a58" stroke-width="0.5" opacity="0.6"/>
<path d="M731.8,36 V45.4" stroke="#7a6a58" stroke-width="0.5" opacity="0.6"/>
<path d="M726.2,58.4 h2.6 l-1.3,1.5 z" fill="#56668a"/>
<g transform="translate(767.8 39.2) rotate(-18)"><rect x="-3.2" y="-4.8" width="6.4" height="9.6" rx="0.8" fill="#d2e0f6" stroke="#3467b0" stroke-width="0.9"/><circle cx="0" cy="-2.0" r="1.7" fill="#f2f6fd" stroke="#3467b0" stroke-width="0.8"/></g>
<path d="M760.6,36.6 V45.2 H767" fill="none" stroke="#3da54a" stroke-width="0.9"/>
<path d="M760.6,45.2 H765.6" stroke="#d23a3a" stroke-width="0.9"/>
<circle cx="765.8" cy="45.4" r="0.9" fill="#b02ab0"/>
<g transform="translate(796.2 42.0) rotate(-24)"><rect x="-2.8" y="-3.2" width="5.6" height="6.4" rx="0.8" fill="#d2e0f6" stroke="#3467b0" stroke-width="0.9"/><circle cx="0" cy="-1.2" r="1.7" fill="#f2f6fd" stroke="#3467b0" stroke-width="0.8"/></g>
<g transform="translate(801.4 38.6) rotate(-18)"><rect x="-3.2" y="-4.8" width="6.4" height="9.6" rx="0.8" fill="#d2e0f6" stroke="#3467b0" stroke-width="0.9"/><circle cx="0" cy="-2.0" r="1.7" fill="#f2f6fd" stroke="#3467b0" stroke-width="0.8"/></g>
<rect x="818.8" y="33.2" width="6.6" height="6.6" fill="none" stroke="#b7bcc8" stroke-width="0.8" stroke-dasharray="1.2 0.9"/>
<rect x="820.6" y="35" width="3" height="3" fill="#cfd3dc"/>
<path d="M822.2,43 V49.6 M822.2,46.2 L825,47.4" stroke="#2e3446" stroke-width="0.9" fill="none"/>
<circle cx="822.2" cy="43.4" r="0.9" fill="#2e3446"/><circle cx="825.2" cy="47.8" r="0.9" fill="#e69a4a"/><circle cx="822.2" cy="49.8" r="0.9" fill="#e69a4a"/>
<rect x="818.8" y="53.4" width="7" height="7" rx="0.7" fill="#3f6fb8"/>
<rect x="820.2" y="54" width="4.2" height="2.6" fill="#e8eefb"/>
<rect x="820.6" y="57.8" width="3.4" height="2.6" fill="#1f3f7a"/>
<rect x="3.9" y="88.2" width="8.8" height="7.2" fill="#f19a2e" stroke="#4668a8" stroke-width="1.2"/>
<rect x="8.6" y="89.6" width="2.6" height="3" fill="#f7b95a"/>
<circle cx="19.6" cy="89.6" r="2.4" fill="#f3cf5a"/>
<path d="M18.2,90.2 h5.4 l1.2,3.6 l1.6,-3.8 h-1.4 M18.2,90.2 v3 h4.4" fill="none" stroke="#1f2f52" stroke-width="1.5"/>
<path d="M20,95.4 q2.4,1.4 4.6,-0.6" stroke="#f0962a" stroke-width="1.4" fill="none"/>
<path d="M29.2,85 V98" stroke="#dcdce4" stroke-width="0.8"/>
<circle cx="36" cy="88.8" r="1.7" fill="none" stroke="#c6c7cc" stroke-width="1"/>
<path d="M33,95.2 q0.4,-3.4 3,-3.4 q1.6,0 2.4,1.2 M36.4,95.4 L42.2,89.6" fill="none" stroke="#c6c7cc" stroke-width="1.1"/>
<path d="M48,95.4 L54.4,88.2 M47.8,96 h4.2" fill="none" stroke="#c6c7cc" stroke-width="1.1"/>
<circle cx="62.4" cy="89.2" r="1.9" fill="#c6c7cc"/>
<rect x="59.6" y="91" width="5" height="5" rx="0.8" fill="#c6c7cc"/>
<rect x="63.4" y="92" width="4.6" height="4.4" rx="0.6" fill="#d4d5d9" stroke="#c6c7cc" stroke-width="0.6"/>
<path d="M8,105.8 H13.2" stroke="#b5b5bb" stroke-width="0.7" stroke-dasharray="0.8 0.8"/>
<rect x="14.3" y="103.3" width="4.8" height="4.8" fill="#fff" stroke="#8a8a92" stroke-width="0.7"/>
<path d="M21.4,108.4 L23,103.6 L28.3,103.2 L26.8,108.4 Z" fill="#3b64b0"/>
<path d="M21.6,108.2 L22.6,105.8 L25.4,105.4 L24.8,108.2 Z" fill="#f0a63a"/>
</svg>
</body>
</html>
